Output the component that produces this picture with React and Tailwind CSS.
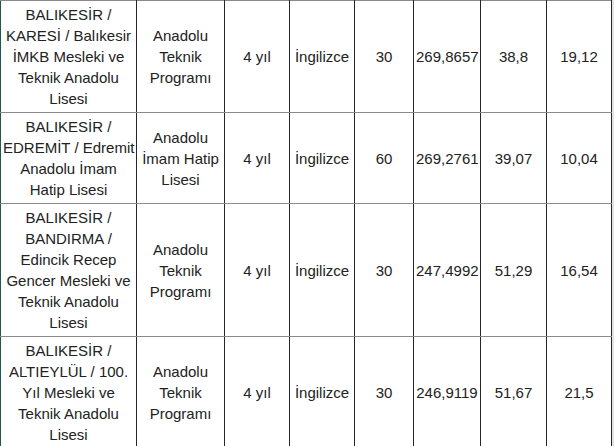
import React from "react";

const rows = [
  {
    school: ["BALIKESİR /", "KARESİ / Balıkesir", "İMKB Mesleki ve", "Teknik Anadolu", "Lisesi"],
    type: ["Anadolu", "Teknik", "Programı"],
    quota: "30",
    score: "269,8657",
    a: "38,8",
    b: "19,12",
  },
  {
    school: ["BALIKESİR /", "EDREMİT / Edremit", "Anadolu İmam", "Hatip Lisesi"],
    type: ["Anadolu", "İmam Hatip", "Lisesi"],
    quota: "60",
    score: "269,2761",
    a: "39,07",
    b: "10,04",
  },
  {
    school: ["BALIKESİR /", "BANDIRMA /", "Edincik Recep", "Gencer Mesleki ve", "Teknik Anadolu", "Lisesi"],
    type: ["Anadolu", "Teknik", "Programı"],
    quota: "30",
    score: "247,4992",
    a: "51,29",
    b: "16,54",
  },
  {
    school: ["BALIKESİR /", "ALTIEYLÜL / 100.", "Yıl Mesleki ve", "Teknik Anadolu", "Lisesi"],
    type: ["Anadolu", "Teknik", "Programı"],
    quota: "30",
    score: "246,9119",
    a: "51,67",
    b: "21,5",
  },
];

const cell =
  "border-x border-x-[#262626] border-y border-y-[#8a8a8a] px-[2px] py-[3px] text-center align-middle";

function Lines({ items }) {
  return items.map((t, i) => (
    <React.Fragment key={i}>
      {i > 0 && <br />}
      {t}
    </React.Fragment>
  ));
}

export default function App() {
  return (
    <div className="w-[614px] h-[446px] overflow-hidden bg-[#e4e4e4]">
      <table
        className="table-fixed border-collapse bg-white text-[15px] leading-[21px] text-[#222]"
        style={{ fontFamily: '"Liberation Sans", Arial, sans-serif', width: 611 }}
      >
        <colgroup>
          <col className="w-[136px]" />
          <col className="w-[88px]" />
          <col className="w-[65px]" />
          <col className="w-[65px]" />
          <col className="w-[59px]" />
          <col className="w-[67px]" />
          <col className="w-[66px]" />
          <col className="w-[65px]" />
        </colgroup>
        <tbody>
          {rows.map((r, i) => (
            <tr key={i}>
              <td className={cell + " border-l-[#1d5a4c] whitespace-nowrap"}>
                <Lines items={r.school} />
              </td>
              <td className={cell + " whitespace-nowrap"}>
                <Lines items={r.type} />
              </td>
              <td className={cell}>4 yıl</td>
              <td className={cell}>İngilizce</td>
              <td className={cell}>{r.quota}</td>
              <td className={cell}>{r.score}</td>
              <td className={cell}>{r.a}</td>
              <td className={cell}>{r.b}</td>
            </tr>
          ))}
        </tbody>
      </table>
    </div>
  );
}
